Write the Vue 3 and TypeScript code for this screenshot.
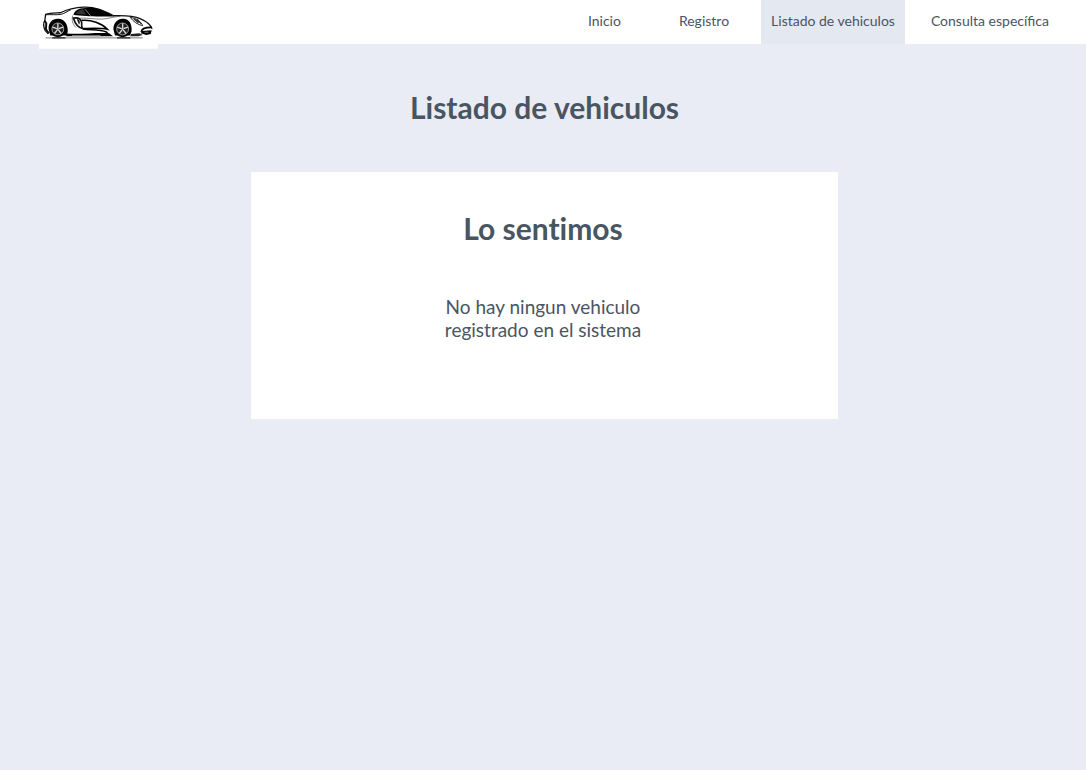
<script setup lang="ts">
interface NavItem {
  label: string
  href: string
  active?: boolean
}

const items: NavItem[] = [
  { label: 'Inicio', href: '#inicio' },
  { label: 'Registro', href: '#registro' },
  { label: 'Listado de vehiculos', href: '#listado', active: true },
  { label: 'Consulta específica', href: '#consulta' },
]
const spokes: number[] = [0, 72, 144, 216, 288]
const wheels: number[] = [57, 253]
</script>

<template>
  <div class="page">
    <header class="bar">
      <a class="logo" href="#inicio" aria-label="Inicio">
        <svg viewBox="0 0 360 147" aria-hidden="true">
          <rect width="360" height="147" fill="#fff" />
          <path d="M20 114H314" stroke="#777" stroke-width="3" />
          <path d="M40 114H80M236 114H276" stroke="#222" stroke-width="4" />
          <path
            d="M28 102L19 92C13 80 13 68 18 60L20 43C34 38 50 39 65 38C88 26 108 22 136 21C170 20 190 29 226 47C260 46 287 47 306 56C324 64 339 75 342 87L338 99L312 105L276 107L84 107Z"
            fill="#fff"
          />
          <path
            d="M28 102L19 92C13 80 13 68 18 60L20 43C34 38 50 39 65 38C88 26 108 22 136 21C170 20 190 29 226 47C260 46 287 47 306 56C324 64 339 75 342 87"
            fill="none" stroke="#111" stroke-width="4" stroke-linejoin="round"
          />
          <path d="M104 44C107 34 114 28 125 25L156 22C184 26 206 37 228 49L184 49C158 49 126 48 104 44Z" fill="#000" />
          <path d="M112 41C115 34 121 30 133 28L142 43Z" fill="#333" />
          <path d="M139 27L156 47" stroke="#ccc" stroke-width="2" />
          <path d="M20 44C36 43 52 45 66 43C78 40 86 33 96 29" fill="none" stroke="#111" stroke-width="3" />
          <path d="M17 62L22 70L21 88L30 100" fill="none" stroke="#111" stroke-width="6" />
          <path d="M102 46C98 60 102 73 112 83" fill="none" stroke="#555" stroke-width="2" />
          <path d="M118 55C138 51 168 59 194 57C214 55 228 49 246 49" fill="none" stroke="#444" stroke-width="2" />
          <path d="M104 54C118 52 127 58 129 67C130 74 126 79 133 86C120 84 110 74 104 54Z" fill="#fff" stroke="#111" stroke-width="5" />
          <path d="M114 56C123 59 126 66 121 74Z" fill="#111" />
          <path d="M129 61C158 58 190 70 207 88C183 83 158 85 135 86" fill="none" stroke="#000" stroke-width="5" />
          <path d="M133 87C158 91 181 87 204 96L210 106" fill="none" stroke="#000" stroke-width="5" />
          <path d="M84 101C124 104 166 98 212 100L224 109L82 109Z" fill="#000" />
          <path d="M100 107H186" stroke="#bbb" stroke-width="2" />
          <path d="M29 86C29 67 41 55 58 56C77 57 88 72 87 95L84 107H34ZM225 88C225 68 238 55 255 56C273 57 282 71 280 95L275 107H230Z" fill="#000" />
          <g v-for="x in wheels" :key="x" :transform="`translate(${x} 87)`">
            <circle r="25" fill="#000" />
            <circle r="18" fill="#222" stroke="#ddd" stroke-width="2" />
            <g v-for="angle in spokes" :key="angle" :transform="`rotate(${angle})`">
              <path d="M0-3V-17" stroke="#ddd" stroke-width="4" />
            </g>
            <circle r="3" fill="#ddd" />
          </g>
          <path d="M276 52C294 54 308 65 314 77C298 74 286 65 276 52Z" fill="#fff" stroke="#222" stroke-width="3" />
          <path d="M287 56L301 68M296 57L309 71" stroke="#222" stroke-width="4" />
          <path d="M309 96C310 87 317 82 339 82" fill="none" stroke="#000" stroke-width="5" />
          <path d="M311 93L341 91L338 102L325 105L308 100Z" fill="#000" />
          <path d="M319 97H331" stroke="#aaa" stroke-width="2" />
          <path d="M278 102L304 100L314 105L300 109H276Z" fill="#222" />
        </svg>
      </a>
      <nav class="nav">
        <a v-for="item in items" :key="item.label" :href="item.href" :class="{ active: item.active }">{{ item.label }}</a>
      </nav>
    </header>
    <main>
      <h1>Listado de vehiculos</h1>
      <section class="card">
        <h2>Lo sentimos</h2>
        <p>No hay ningun vehiculo registrado en el sistema</p>
      </section>
    </main>
  </div>
</template>

<style>
body {
  margin: 0;
  background: #e9ecf4;
}
</style>

<style scoped>
.page {
  font-family: Lato, sans-serif;
  color: #4a5562;
}
.bar {
  display: flex;
  justify-content: space-between;
  height: 44px;
  padding: 0 27px 0 39px;
  background: #fff;
}
.logo {
  flex: none;
  width: 119px;
  height: 49px;
}
.logo svg {
  display: block;
  width: 100%;
  height: 100%;
}
.nav {
  display: flex;
  gap: 16px;
}
.nav a {
  padding: 0 10px;
  font-size: 14px;
  line-height: 42px;
  color: inherit;
  text-decoration: none;
  white-space: nowrap;
}
.nav a:first-child {
  margin-right: 22px;
}
.nav a:nth-child(2) {
  margin-right: 6px;
}
.nav .active {
  background: #e4e8f1;
}
main {
  padding: 43px 24px 43px 27px;
}
h1,
h2 {
  margin: 0;
  font-size: 30px;
  line-height: 40px;
  font-weight: 700;
  font-variant-ligatures: none;
  text-align: center;
}
.card {
  box-sizing: border-box;
  max-width: 587px;
  margin: 45px auto 0;
  padding: 36px 27px 78px 24px;
  background: #fff;
}
p {
  max-width: 210px;
  margin: 47px auto 0;
  font-size: 19px;
  line-height: 23px;
  text-align: center;
}
</style>
